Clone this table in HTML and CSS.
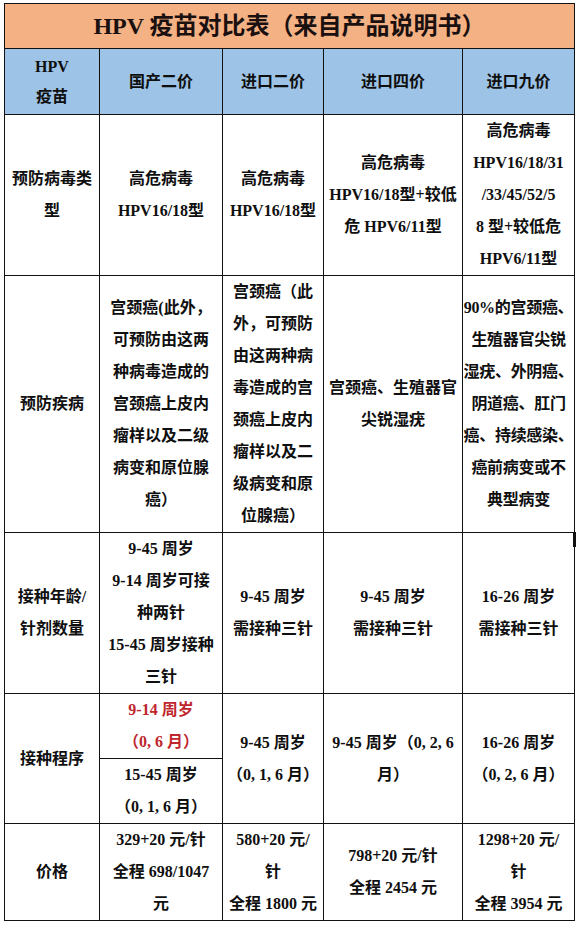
FILE: index.html
```html
<!DOCTYPE html>
<html lang="zh-CN">
<head>
<meta charset="utf-8">
<title>HPV疫苗对比表</title>
<link rel="stylesheet" href="styles.css">
</head>
<body>
<div class="page">
  <table class="cmp">
    <colgroup>
      <col class="c1"><col class="c2"><col class="c3"><col class="c4"><col class="c5">
    </colgroup>
    <tr class="r-title"><td colspan="5" class="title">HPV 疫苗对比表（来自产品说明书）</td></tr>
    <tr class="r-head">
      <td>HPV<br>疫苗</td>
      <td>国产二价</td>
      <td>进口二价</td>
      <td>进口四价</td>
      <td>进口九价</td>
    </tr>
    <tr class="r1">
      <td>预防病毒类<br>型</td>
      <td>高危病毒<br>HPV16/18型</td>
      <td>高危病毒<br>HPV16/18型</td>
      <td>高危病毒<br>HPV16/18型+较低<br>危 HPV6/11型</td>
      <td>高危病毒<br>HPV16/18/31<br>/33/45/52/5<br>8 型+较低危<br>HPV6/11型</td>
    </tr>
    <tr class="r2">
      <td>预防疾病</td>
      <td>宫颈癌(此外，<br>可预防由这两<br>种病毒造成的<br>宫颈癌上皮内<br>瘤样以及二级<br>病变和原位腺<br>癌）</td>
      <td>宫颈癌（此<br>外，可预防<br>由这两种病<br>毒造成的宫<br>颈癌上皮内<br>瘤样以及二<br>级病变和原<br>位腺癌）</td>
      <td>宫颈癌、生殖器官<br>尖锐湿疣</td>
      <td class="tight">90%的宫颈癌、<br>生殖器官尖锐<br>湿疣、外阴癌、<br>阴道癌、肛门<br>癌、持续感染、<br>癌前病变或不<br>典型病变</td>
    </tr>
    <tr class="r3">
      <td>接种年龄/<br>针剂数量</td>
      <td>9-45 周岁<br>9-14 周岁可接<br>种两针<br>15-45 周岁接种<br>三针</td>
      <td>9-45 周岁<br>需接种三针</td>
      <td>9-45 周岁<br>需接种三针</td>
      <td>16-26 周岁<br>需接种三针</td>
    </tr>
    <tr class="r4">
      <td rowspan="2">接种程序</td>
      <td class="red">9-14 周岁<br>（0, 6 月）</td>
      <td rowspan="2">9-45 周岁<br>（0, 1, 6 月）</td>
      <td rowspan="2">9-45 周岁（0, 2, 6<br>月）</td>
      <td rowspan="2">16-26 周岁<br>（0, 2, 6 月）</td>
    </tr>
    <tr class="r4">
      <td>15-45 周岁<br>（0, 1, 6 月）</td>
    </tr>
    <tr class="r5">
      <td>价格</td>
      <td>329+20 元/针<br>全程 698/1047<br>元</td>
      <td>580+20 元/<br>针<br>全程 1800 元</td>
      <td>798+20 元/针<br>全程 2454 元</td>
      <td>1298+20 元/<br>针<br>全程 3954 元</td>
    </tr>
  </table>
  <span class="edge-mark"></span>
</div>
</body>
</html>
```

FILE: styles.css
```css
html, body {
  margin: 0;
  padding: 0;
  background: #ffffff;
}

.page {
  position: relative;
  padding: 3px 0 0 4px;
  width: 574px;
}

.cmp {
  border-collapse: collapse;
  table-layout: fixed;
  width: 570px;
  font-family: "Liberation Serif", "Noto Sans CJK SC", serif;
  font-weight: 700;
  font-size: 16px;
  line-height: 32px;
  color: #0f0f0f;
}

.c1 { width: 95px; }
.c2 { width: 123px; }
.c3 { width: 101px; }
.c4 { width: 139px; }
.c5 { width: 112px; }

.cmp td {
  border: 1px solid #111;
  padding: 0;
  text-align: center;
  vertical-align: middle;
  white-space: nowrap;
}

.r-title { height: 45px; }
.r-head { height: 66px; }
.r1 { height: 161px; }
.r2 { height: 256px; }
.r3 { height: 161px; }
.r4 { height: 65px; }
.r5 { height: 96px; }

.title {
  background: #F4B183;
  font-size: 24px;
  line-height: 30px;
  color: #1a1010;
}

.r-head td {
  background: #9DC3E6;
  line-height: 30px;
}

.red {
  color: #C0262D;
}

.tight {
  letter-spacing: -0.3px;
}

.edge-mark {
  position: absolute;
  left: 573px;
  top: 532px;
  width: 3px;
  height: 15px;
  background: #111;
}
```
